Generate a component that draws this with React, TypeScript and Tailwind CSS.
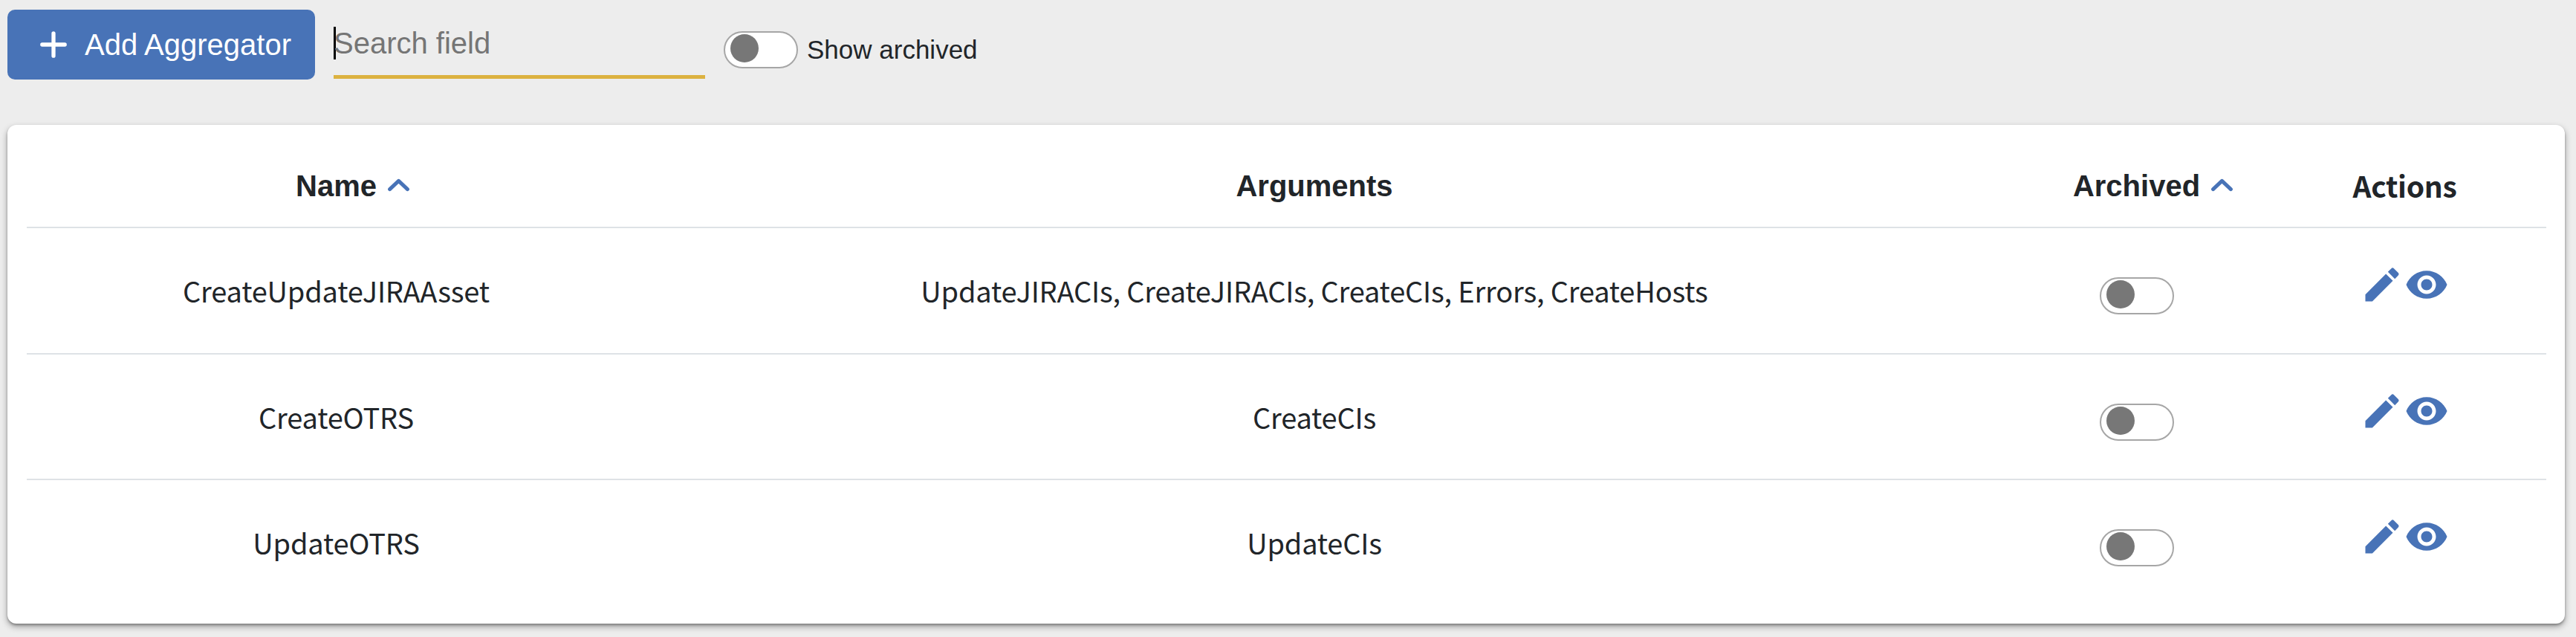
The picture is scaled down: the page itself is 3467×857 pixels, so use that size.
import React from "react";

const rows = [
  { name: "CreateUpdateJIRAAsset", args: "UpdateJIRACIs, CreateJIRACIs, CreateCIs, Errors, CreateHosts" },
  { name: "CreateOTRS", args: "CreateCIs" },
  { name: "UpdateOTRS", args: "UpdateCIs" },
];

const grid = "grid grid-cols-[833px_1800px_413px_1fr]";

function Toggle() {
  return (
    <span className="inline-flex h-[50px] w-[100px] shrink-0 items-start rounded-full border-2 border-[#a6a6a6] bg-white pt-[2px] pl-[7px]">
      <span className="size-[38px] rounded-full bg-[#777777]" />
    </span>
  );
}

function Chevron() {
  return (
    <svg className="-mr-[44px] ml-[15px] h-[18px] w-[29px] -translate-y-[1px]" viewBox="0 0 29 18" fill="none">
      <path d="M2.6 14.6 14.5 3.4 26.4 14.6" stroke="#4873b7" strokeWidth="5" strokeLinecap="round" strokeLinejoin="round" />
    </svg>
  );
}

function EditIcon() {
  return (
    <svg className="size-[60px]" viewBox="0 0 24 24" fill="#4873b7">
      <path d="M3 17.25V21h3.75L17.81 9.94l-3.75-3.75L3 17.25zM20.71 7.04a.996.996 0 0 0 0-1.41l-2.34-2.34a.996.996 0 0 0-1.41 0l-1.83 1.83 3.75 3.75 1.83-1.83z" />
    </svg>
  );
}

function ViewIcon() {
  return (
    <svg className="size-[60px]" viewBox="0 0 24 24" fill="#4873b7">
      <path d="M12 4.5C7 4.5 2.73 7.61 1 12c1.73 4.39 6 7.5 11 7.5s9.27-3.11 11-7.5c-1.73-4.39-6-7.5-11-7.5zM12 17c-2.76 0-5-2.24-5-5s2.24-5 5-5 5 2.24 5 5-2.24 5-5 5zm0-8c-1.66 0-3 1.34-3 3s1.34 3 3 3 3-1.34 3-3-1.34-3-3-3z" />
    </svg>
  );
}

export default function App() {
  return (
    <div className="h-[857px] w-[3467px] overflow-hidden bg-[#ededed] pl-[10px] font-['Liberation_Sans',Arial,sans-serif] text-[#212529]">
      <div className="flex h-[168px] items-start pt-[13px]">
        <button className="flex h-[94px] w-[414px] items-center rounded-[10px] bg-[#4873b7] pl-[44px] text-[40px] leading-[46px] text-white">
          <svg className="h-[36px] w-[36px]" viewBox="0 0 36 36" fill="none">
            <path d="M18 2.8V33.2M2.8 18H33.2" stroke="#fff" strokeWidth="5.3" strokeLinecap="round" />
          </svg>
          <span className="ml-[24px] whitespace-nowrap">Add Aggregator</span>
        </button>
        <div className="ml-[25px] flex h-[93px] w-[500px] items-start border-b-[5px] border-[#dcb240] pt-[23px]">
          <span className="-mr-[3px] h-[44px] w-[3px] bg-black" />
          <span className="text-[40px] leading-[44px] text-[#757575]">Search field</span>
        </div>
        <div className="mt-[29px] ml-[25px] flex items-center">
          <Toggle />
          <span className="ml-[12px] text-[35px] leading-[50px]">Show archived</span>
        </div>
      </div>

      <div className="h-[671px] w-[3442px] rounded-[12px] bg-white pr-[25px] pl-[26px] shadow-[0_4px_8px_rgba(0,0,0,0.35),0_2px_3px_rgba(0,0,0,0.25)]">
        <div className={grid + " h-[139px] border-b-2 border-[#dee2e6] pt-[59px] text-[40px] leading-[46px] font-bold"}>
          <div className="flex h-[46px] items-center justify-center">Name<Chevron /></div>
          <div className="text-center">Arguments</div>
          <div className="flex h-[46px] items-center justify-center">Archived<Chevron /></div>
          <div className="pr-[36px] text-center font-['Noto_Sans_CJK_SC',sans-serif] text-[39px] leading-[44px] font-bold tracking-[-0.3px]">Actions</div>
        </div>
        {rows.map((row, i) => (
          <div
            key={row.name}
            className={grid + " h-[169.5px] text-center font-['Noto_Sans_CJK_SC',sans-serif] text-[38px] leading-[54px] tracking-[-0.19px]" + (i < 2 ? " border-b-2 border-[#dee2e6]" : "")}
          >
            <div className="pt-[57px]">{row.name}</div>
            <div className="pt-[57px]">{row.args}</div>
            <div className="flex justify-center pt-[66px]"><Toggle /></div>
            <div className="flex justify-center pt-[46px] pr-[37px]"><EditIcon /><ViewIcon /></div>
          </div>
        ))}
      </div>
    </div>
  );
}
